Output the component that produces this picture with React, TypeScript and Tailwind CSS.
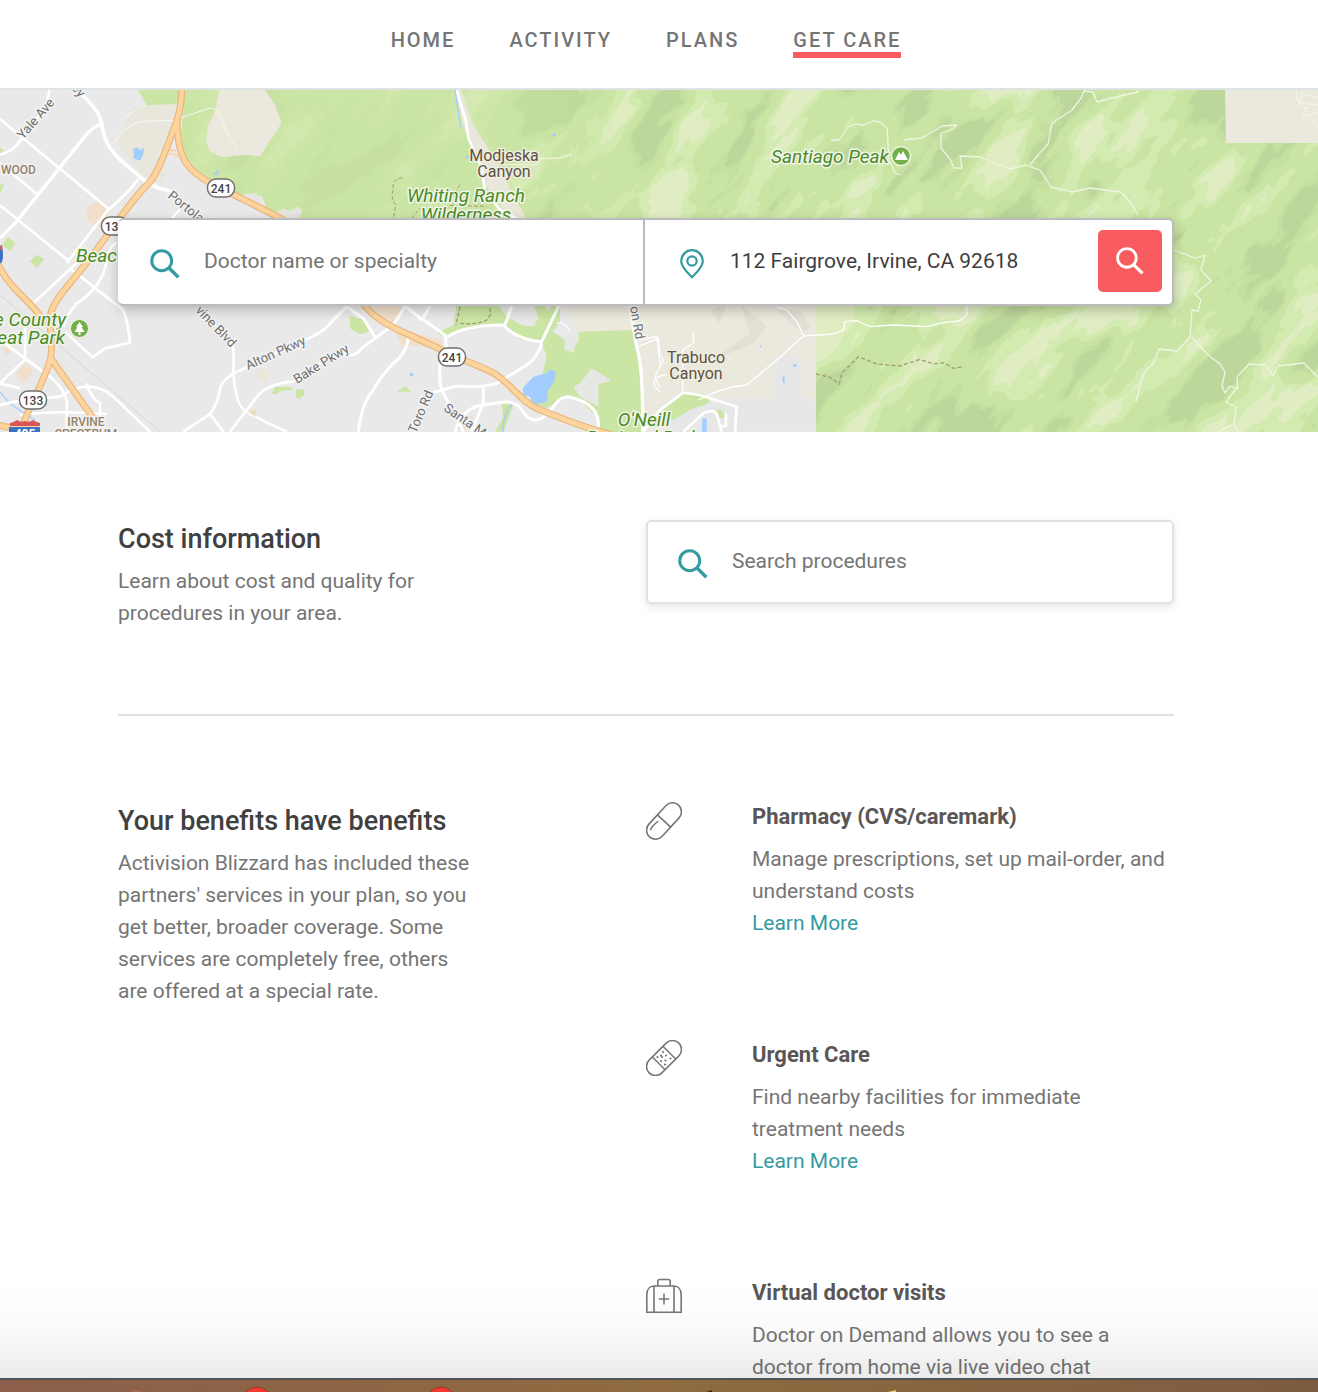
import React from "react";

const FONT = "font-['Roboto','Liberation_Sans',sans-serif]";

function SearchIcon({ className }: { className: string }) {
  return (
    <svg viewBox="0 0 30 30" className={className} fill="none" stroke="currentColor" aria-hidden="true">
      <circle cx="11.7" cy="11.7" r="10" strokeWidth="3" />
      <path d="M18.8 18.8 28.4 28.2" strokeWidth="3.4" />
    </svg>
  );
}

function PinIcon() {
  return (
    <svg viewBox="0 0 24 30" className="mt-1.5 h-[30px] w-6 shrink-0 text-[#349ba1]" fill="none" stroke="currentColor" strokeWidth="2.2" aria-hidden="true">
      <path d="M12 28.2C9 25 1.2 18.500 1.200 12A10.800 10.800 0 0 1 22.800 12C22.800 18.500 15 25 12 28.200Z" />
      <circle cx="12" cy="12" r="4.700" />
    </svg>
  );
}

function PillIcon() {
  return (
    <svg viewBox="0 0 36 38" className="h-[38px] w-9" fill="none" stroke="#767676" strokeWidth="1.6" strokeLinecap="round" aria-hidden="true">
      <g transform="translate(18 19) rotate(-47.500)">
        <rect x="-21.500" y="-9" width="43" height="18" rx="9" />
        <path d="M0-9V9" />
      </g>
      <path d="M4.700 27.500C5.500 24.500 9 22 11.700 19.500" />
    </svg>
  );
}

function BandageIcon() {
  const dots = [
    [17, 12], [15, 15.500], [20, 15.500], [11.500, 17], [16, 17], [24.500, 18.500], [15, 21], [19.500, 20.500], [19, 24.500],
  ];
  return (
    <svg viewBox="0 0 36 36" className="h-9 w-9" fill="none" stroke="#767676" strokeWidth="1.500" aria-hidden="true">
      <g transform="translate(18 18) rotate(-45)">
        <rect x="-21" y="-9" width="42" height="18" rx="9" />
        <path d="M-7.500-9V9M7.500-9V9" />
      </g>
      {dots.map(([x, y]) => (
        <circle key={`${x}-${y}`} cx={x} cy={y} r="1.1" fill="#767676" stroke="none" />
      ))}
    </svg>
  );
}

function BagIcon() {
  return (
    <svg viewBox="0 0 36 36" className="h-9 w-9" fill="none" stroke="#767676" strokeWidth="1.600" aria-hidden="true">
      <path d="M.8 34.200V17C.8 11 4 8 8 8H28C32 8 35.200 11 35.200 17V34.200Z" />
      <path d="M8 8V34M28 8V34M11.800 8V3.500Q11.800 1.500 13.800 1.500H22.200Q24.200 1.500 24.200 3.500V8" />
      <path d="M18 15.500V26.500M12.800 21H23.200" />
    </svg>
  );
}

function Shield({ x, y, label }: { x: number; y: number; label: string }) {
  return (
    <g>
      <rect x={x - 13.500} y={y - 9} width="27" height="18" rx="8.500" fill="#fff" stroke="#6f6f6f" strokeWidth="1.500" />
      <text x={x} y={y + 4.500} textAnchor="middle" fontSize="12" fontWeight="500" fill="#444">
        {label}
      </text>
    </g>
  );
}

const HIGHWAYS = [
  "M182 88C181 108 179 116 173 131C164 155 156 178 146 186C128 204 108 236 84 266C70 284 51 302 50 318C50 335 54 350 49 364C42 386 28 406 20 434",
  "M177 122C178 158 186 170 212 184C232 194 262 208 285 221L362 302C372 316 385 324 405 333L440 349C462 361 488 368 498 376C514 388 522 402 538 409C560 418 585 428 612 435",
  "M-3 262C10 292 34 302 44 322M52 360L96 422M-2 425Q16 430 34 427",
];

function TerrainMap() {
  return (
    <svg
      viewBox="0 90 1318 342"
      preserveAspectRatio="xMidYMid slice"
      className="absolute inset-0 h-full w-full"
      fontFamily="Roboto, 'Liberation Sans', sans-serif"
      role="img"
      aria-label="Map of the area around Irvine"
    >
      <defs>
        <filter id="relief" x="0" y="0" width="100%" height="100%" colorInterpolationFilters="sRGB">
          <feTurbulence type="fractalNoise" baseFrequency="0.009 0.022" numOctaves="4" seed="11" />
          <feColorMatrix values="1 0 0 0 0  1 0 0 0 0  1 0 0 0 0  0 0 0 0 1" />
          <feComponentTransfer>
            <feFuncR type="discrete" tableValues=".745 .745 .745 .745 .745 .745 .745 .775 .796 .796 .796 .831 .831 .88 .88 .88 .88 .88 .88 .88" />
            <feFuncG type="discrete" tableValues=".843 .843 .843 .843 .843 .843 .843 .878 .898 .898 .898 .918 .918 .933 .933 .933 .933 .933 .933 .933" />
            <feFuncB type="discrete" tableValues=".608 .608 .608 .608 .608 .608 .608 .635 .643 .643 .643 .694 .694 .761 .761 .761 .761 .761 .761 .761" />
          </feComponentTransfer>
          <feGaussianBlur stdDeviation="0.6" />
        </filter>
        <clipPath id="hills">
          <path d="M184 88H1320V434H816V306H640L282 219 268 212 262 196 246 194 238 198 212 184 190 165 181 145Z" />
        </clipPath>
        <linearGradient id="flatten" x1="130" x2="820" y1="0" y2="0" gradientUnits="userSpaceOnUse">
          <stop offset="0" stopColor="#cbe5a4" stopOpacity=".75" />
          <stop offset=".45" stopColor="#cbe5a4" stopOpacity=".65" />
          <stop offset=".75" stopColor="#cbe5a4" stopOpacity="0" />
        </linearGradient>
      </defs>

      <rect y="88" width="1318" height="346" fill="#e9e9e9" />

      <g clipPath="url(#hills)">
        <g transform="rotate(-48 659 261)">
          <rect x="-100" y="-500" width="1500" height="1500" filter="url(#relief)" />
        </g>
        <rect x="130" y="88" width="690" height="346" fill="url(#flatten)" />
        <path d="M1225 88H1320V143H1226Z" fill="#ebe8de" />
      </g>
      <path d="M137 88 147 106 176 105 182 88Z" fill="#cbe5a4" />

      {/* sandy ground and small parks, upper left */}
      <g transform="translate(0 88) scale(.33333)">
        <path d="M440 52 400 60 375 105 350 165 400 225 440 275 480 285 500 260 470 200 525 100V48Z" fill="#e9e7dc" />
        <path d="M658 6 645 70 625 110 618 160 630 190 665 208 735 200 780 205 845 105 825 50 795 6Z" fill="#ebe8de" />
        <path d="M730 318 765 316 785 335 780 350ZM830 372 850 362 870 370 895 355 907 370 895 392H840Z" fill="#e7e5e0" />
        <path d="M300 335 265 355 258 380 265 400 298 420 320 385 330 365Z" fill="#f1dfcb" />
        <path d="M400 182 412 178 420 186 432 180 430 198 420 218 402 212Z M640 260 655 243 655 262Z" fill="#a3ccff" />
        <path d="M0 178 12 188 0 198ZM0 290 12 288 0 320ZM25 448 48 465 30 488 5 470ZM90 520 110 500 133 512 110 540Z" fill="#cbe5a4" />
        <g fill="none" stroke="#fff" strokeWidth="8">
          <path d="M240 15C290 60 298 80 306 110C310 150 325 180 360 215L430 275Q460 300 520 312" strokeWidth="11" />
          <path d="M300 110Q270 120 235 170L50 400 0 450" strokeWidth="10" />
          <path d="M0 93 325 362M148 6Q146 30 135 60L60 160Q40 190 0 200M0 352 210 522M0 225 110 318M415 272Q390 310 325 365L200 525M540 365 515 390M350 465Q330 470 318 520" />
          <path d="M345 165Q370 110 430 100L520 97L630 60C680 65 650 110 712 178M375 85 410 67" stroke="#f8f7f2" strokeWidth="3" />
        </g>
        <path d="M495 205Q515 190 535 205M505 187H528" fill="none" stroke="#fbd3a0" strokeWidth="5" />
      </g>

      {/* streets, lower left */}
      <g transform="translate(0 260) scale(.33333)">
        <path d="M75 310 100 330 75 368 45 345ZM5 262H35L20 288Z" fill="#f1dfcb" />
        <path d="M785 325 815 335 800 370 765 345Z" fill="#eae6d8" />
        <path d="M815 400 825 382 875 380V390L840 393 830 403ZM888 388H912V405L898 418 888 412Z" fill="#cbe5a4" />
        <path d="M0 105 480 515" stroke="#cfcfcf" strokeWidth="2" />
        <path d="M0 395C30 440 60 450 105 480" fill="none" stroke="#a3ccff" strokeWidth="4" />
        <g fill="none" stroke="#fff" strokeWidth="8">
          <path d="M0 240 150 350Q210 400 200 450V515M75 195V300Q40 330 0 370L60 385M0 435Q80 415 180 410 270 350 340 410L450 515M60 465Q160 450 320 462M260 370Q270 410 300 430V515M210 25 370 150Q385 190 390 248L315 265 278 292 195 215M320 0Q310 80 230 130 200 165 190 200M100 130 240 0" />
          <path d="M690 235Q705 260 700 330Q705 440 740 455Q800 490 860 515M550 515 630 462Q655 430 660 385 670 350 735 325L880 250Q960 230 995 185M630 462 670 515M690 515 775 405Q810 370 880 365L1000 280" />
        </g>
        <path d="M750 455 765 450V465Z" stroke="#f1dfcb" strokeWidth="8" />
      </g>

      {/* foothill canyon strip */}
      <g transform="translate(330 88) scale(.33333)">
        <path d="M375 6H393L430 110 480 190 540 300 590 395H545L455 280V230L405 130Z" fill="#e9e6dc" />
        <path d="M380 6 408 100 415 150 455 240 465 310 510 365 560 392" fill="none" stroke="#fff" strokeWidth="8" />
        <path d="M375 6 392 118" fill="none" stroke="#a3ccff" strokeWidth="4" />
        <path d="M500 230H615L635 212 690 210 725 198" fill="none" stroke="#eef3dd" strokeWidth="4" />
        <path d="M405 212 412 200 420 208ZM668 136H678V144H668Z" fill="#a3ccff" />
        <path d="M218 270Q185 270 190 305 180 330 197 350L190 392M390 290 370 325M245 392 270 360M360 352 470 355" fill="none" stroke="#a39c74" strokeWidth="3" strokeDasharray="12 6" />
      </g>

      {/* neighbourhoods and park south of the toll road */}
      <g transform="translate(330 260) scale(.33333)">
        <path d="M690 130H1458V515H930Z" fill="#ebe8de" />
        <path d="M380 130H690V185L640 255 670 215 705 240 745 250V215L905 210 925 260 935 340 945 520H815L800 470 740 410 700 410 650 445 615 432 640 330 650 290 635 245 570 240 525 195 470 195 400 205 345 228 320 220 370 195Z" fill="#cbe5a4" />
        <path d="M500 130H610L625 175 610 200 575 195 530 170ZM640 130H670L655 155ZM705 225 745 225 730 278 703 268ZM785 325 845 362 805 372V440L750 410 730 380 750 370Z" fill="#e7e7e5" />
        <path d="M60 168 105 180 118 215 90 222 60 205ZM200 395 225 377 245 395ZM515 430 550 435 520 515H495L520 470Z" fill="#cbe5a4" />
        <path d="M120 130H218L205 175 180 195ZM185 200 335 240V275L290 260 235 255 215 255ZM400 460 430 470 405 510H375Z" fill="#f1dfcb" />
        <path d="M578 385 610 350 650 340 660 328 678 335 672 365 655 390 650 425 608 435 600 410 580 405ZM240 340H250V348H240Z" fill="#a3ccff" />
        <path d="M555 425Q520 450 518 515" fill="none" stroke="#a3ccff" strokeWidth="4" />
        <g fill="none" stroke="#fff" strokeWidth="9">
          <path d="M0 190 50 140 100 175 137 235M40 285Q80 290 95 265L190 195 225 140 345 225 350 265M230 140 275 180M300 140 275 180M0 0M235 235Q230 280 190 310 150 350 130 390 95 430 85 515M345 235Q400 195 520 195 560 240 635 245L690 130M525 195 545 140M635 250Q625 290 590 315L500 370Q450 385 380 378L300 400M330 310Q325 370 340 400 380 470 400 515M460 380V430L425 515M375 515Q400 440 460 435L530 425C590 430 570 480 620 480 670 470 670 410 715 410Q810 430 805 500" />
          <path d="M900 140 920 260Q940 320 938 515" strokeWidth="10" />
        </g>
        <g fill="none" stroke="#fff" strokeWidth="4">
          <path d="M680 190Q700 180 720 215M925 260 985 235 990 285 1000 300 975 350 990 385" />
        </g>
        <path d="M390 140 378 195M390 190Q440 195 470 180 490 160 475 140" fill="none" stroke="#a39c74" strokeWidth="4" strokeDasharray="12 6" />
      </g>

      {/* canyon settlement */}
      <g transform="translate(640 260) scale(.33333)">
        <path d="M260 415H400V290H482V400L528 430V515H60L100 460Z" fill="#e7e7e7" />
        <path d="M70 450 130 400 185 400 210 415 205 430 150 450 100 480ZM220 460 240 447 258 470 240 475Z" fill="#cbe5a4" />
        <path d="M188 475H200V515H185ZM428 348 434 350V372L427 365ZM460 312H470V320H460ZM358 258 365 255 363 265Z" fill="#a3ccff" />
        <path d="M300 130 380 200 340 250 220 300 330 220ZM410 150 480 150 510 200 490 220ZM210 150 260 130 240 190Z" fill="#e2dfd4" />
        <g fill="none" stroke="#fff" strokeWidth="6">
          <path d="M10 515 60 450 130 398 180 405 290 440 285 515M130 515 190 460Q230 440 235 480L245 515M240 498H258V460" strokeWidth="8" />
          <path d="M0 240 50 230 60 310M80 345Q30 350 45 380L60 395M128 395V270L160 250V220M175 420Q250 380 320 375 360 340 400 310L490 228 580 222 610 210 615 185 650 182 690 200 760 195 860 200 910 188 960 182 980 165V140M490 225 470 185 440 150 410 140" strokeWidth="4" />
        </g>
        <path d="M528 342 570 352 598 372 605 340 655 290 710 312 780 318 840 298 880 312 910 308 940 325 970 320" fill="none" stroke="#a39c74" strokeWidth="4" strokeDasharray="12 7" />
      </g>

      {/* ridge trails */}
      <g fill="none" stroke="#f0f5e2" strokeWidth="1.300" strokeLinejoin="round">
        <path d="M831 140H839L848 127 856 124 863 125 873 121 880 122 887 128 888 143 889 160 895 173 901 175" />
        <path d="M904 140 921 138 936 130 942 126 957 125 951 130 941 133 941 148 950 159 954 168H962L960 156 980 157 992 162 1010 169 1025 165 1040 170 1051 187 1072 192 1090 188 1121 192 1130 202 1138 215M1030 165 1038 155 1048 144 1052 123 1072 110 1081 98 1084 91 1093 92 1097 102 1112 98 1138 92V89M1174 250 1195 258 1205 255 1201 270 1211 281 1195 294 1201 300 1198 311 1192 310 1190 337 1177 351 1159 349 1154 362 1143 374 1136 402M1192 337 1207 354 1220 364 1225 372 1222 386 1225 393 1230 386 1238 389 1237 377 1249 364 1266 365 1273 376 1278 366 1304 363 1318 377M1238 386 1226 402 1236 407 1234 424 1218 432M1234 424 1238 433" />
        <path d="M1296 90Q1297 108 1307 108M1302 92 1300 103 1318 105M1304 94 1318 98M1307 108 1302 116 1318 113M1310 117Q1316 126 1320 126" />
      </g>

      {/* freeways */}
      <g fill="none" strokeLinecap="round">
        {HIGHWAYS.map((d) => (
          <path key={`casing-${d}`} d={d} stroke="#e9b77d" strokeWidth="7" />
        ))}
        {HIGHWAYS.map((d) => (
          <path key={d} d={d} stroke="#fdd49d" strokeWidth="4.600" />
        ))}
      </g>

      <Shield x={221} y={188} label="241" />
      <Shield x={115} y={226} label="133" />
      <Shield x={452} y={357} label="241" />
      <Shield x={33} y={400} label="133" />
      <path d="M-2 247 2 245Q4 256 2 262L-2 265Z" fill="#3d73c4" />
      <path d="M-2 247 2 245V250H-2Z" fill="#db5757" />
      <path d="M9 427H40V434H9Z" fill="#3d73c4" />
      <path d="M10 423Q15 422 17 420 21 423 25 421 29 423 33 420 36 422 40 423V426H10Z" fill="#db5757" />
      <text x="25" y="438" textAnchor="middle" fontSize="12" fontWeight="700" fill="#fff">405</text>

      <g paintOrder="stroke" strokeLinejoin="round" strokeWidth="3">
        <g fontSize="13" fill="#6e6e6e" stroke="#f3f3f3">
          <text transform="translate(23 140) rotate(-49)">Yale Ave</text>
          <text transform="translate(71 88) rotate(50)">ey</text>
          <text transform="translate(167 197) rotate(39)">Portola Pkwy</text>
          <text transform="translate(195 311) rotate(46)">vine Blvd</text>
          <text transform="translate(248 370) rotate(-24)">Alton Pkwy</text>
          <text transform="translate(297 384) rotate(-32)">Bake Pkwy</text>
          <text transform="translate(416 434) rotate(-67)">Toro Rd</text>
          <text transform="translate(443 410) rotate(35)">Santa Margarita</text>
          <text transform="translate(630 307) rotate(80)">on Rd</text>
        </g>
        <g fontSize="12" fontWeight="500" fill="#94816a" stroke="#f3f3f3">
          <text x="1" y="174">WOOD</text>
          <text x="86" y="426" textAnchor="middle">IRVINE</text>
          <text x="86" y="438" textAnchor="middle">SPECTRUM</text>
        </g>
        <g fontSize="16" fill="#5f5145" stroke="#eeeedf" textAnchor="middle">
          <text x="504" y="161">Modjeska</text>
          <text x="504" y="177">Canyon</text>
          <text x="696" y="363">Trabuco</text>
          <text x="696" y="379">Canyon</text>
        </g>
        <g fontSize="19" fontStyle="italic" fill="#4a8a28" stroke="#f2f6e8">
          <text x="466" y="202" textAnchor="middle">Whiting Ranch</text>
          <text x="466" y="221" textAnchor="middle">Wilderness</text>
          <text x="771" y="163">Santiago Peak</text>
          <text x="76" y="262">Beacon</text>
          <text x="66" y="326" textAnchor="end">e County</text>
          <text x="65" y="344" textAnchor="end">eat Park</text>
          <text x="644" y="426" textAnchor="middle">O'Neill</text>
          <text x="643" y="444" textAnchor="middle">Regional Park</text>
        </g>
      </g>
      <circle cx="901" cy="156" r="9.500" fill="#74b04a" stroke="#eef5e3" strokeWidth="1.500" />
      <path d="M895 160 899 152 901 155 903 151 908 160Z" fill="#fff" />
      <circle cx="79.500" cy="328.500" r="9" fill="#74b04a" stroke="#eef5e3" />
      <path d="M79.500 322 83 327H81.500L84.500 332H80.500V335H78.500V332H74.500L77.500 327H76Z" fill="#fff" />
    </svg>
  );
}

const NAV = ["Home", "Activity", "Plans", "Get care"];

function Header() {
  return (
    <header className="shrink-0 border-b-2 border-[#dfe3e3] bg-white pr-[26px]">
      <nav className="flex h-[88px] justify-center gap-[54px] pt-7">
        {NAV.map((item) => {
          const active = item === "Get care";
          return (
            <a
              key={item}
              href="#"
              aria-current={active ? "page" : undefined}
              className={
                active
                  ? "h-[30px] border-b-6 border-[#f95c60] text-xl leading-6 font-medium tracking-[2px] text-[#757575] uppercase"
                  : "h-[30px] text-xl leading-6 font-medium tracking-[2px] text-[#757575] uppercase"
              }
            >
              {item}
            </a>
          );
        })}
      </nav>
    </header>
  );
}

function CareSearch() {
  return (
    <section className="relative shrink-0 overflow-hidden pt-32 pr-[26px] pb-[126px]">
      <TerrainMap />
      <form
        className="relative mx-auto grid h-[88px] max-w-[1056px] grid-cols-2 rounded-md border-y-2 border-r-2 border-[#bbbbbd] bg-white shadow-[0_4px_12px_rgba(0,0,0,0.22)]"
        onSubmit={(e) => e.preventDefault()}
      >
        <label className="flex items-center gap-6 border-r-2 border-[#bbbbbd] pb-0.5 pl-8">
          <SearchIcon className="mt-1.5 h-[30px] w-[30px] shrink-0 text-[#349ba1]" />
          <span className="sr-only">Doctor name or specialty</span>
          <input
            type="text"
            placeholder="Doctor name or specialty"
            className="w-full min-w-0 bg-transparent text-[21px] leading-8 text-[#414141] outline-none placeholder:text-[#757575]"
          />
        </label>
        <div className="flex pt-2.5 pr-2.5 pb-3">
          <label className="flex flex-1 items-center gap-[26px] pl-[35px]">
            <PinIcon />
            <span className="sr-only">Location</span>
            <input
              type="text"
              defaultValue="112 Fairgrove, Irvine, CA 92618"
              className="w-full min-w-0 bg-transparent text-[21px] leading-8 text-[#3f3d3d] outline-none"
            />
          </label>
          <button type="submit" aria-label="Search" className="flex w-16 items-center justify-center rounded-[5px] bg-[#f95c60] text-white">
            <SearchIcon className="h-7 w-7" />
          </button>
        </div>
      </form>
    </section>
  );
}

function SectionIntro({ title, children, className }: { title: string; children: React.ReactNode; className: string }) {
  return (
    <div className={className}>
      <h2 className="text-[27px] leading-8 font-medium text-[#414040]">{title}</h2>
      <p className="mt-2.5 text-[21px] leading-8 text-[#757575]">{children}</p>
    </div>
  );
}

const BENEFITS = [
  { title: "Pharmacy (CVS/caremark)", text: ["Manage prescriptions, set up mail-order, and", "understand costs"], link: true, icon: <PillIcon /> },
  { title: "Urgent Care", text: ["Find nearby facilities for immediate", "treatment needs"], link: true, icon: <BandageIcon /> },
  { title: "Virtual doctor visits", text: ["Doctor on Demand allows you to see a", "doctor from home via live video chat"], link: false, icon: <BagIcon /> },
];

export default function App() {
  return (
    <div className={`flex h-screen flex-col overflow-hidden bg-white ${FONT}`}>
      <Header />
      <div className="relative flex min-h-0 flex-1 flex-col overflow-hidden">
        <CareSearch />
        <main className="pr-[26px]">
          <div className="mx-auto max-w-[1056px]">
            <section className="grid grid-cols-2 border-b-2 border-[#dfe1e1] pt-[88px] pb-[85px]">
              <SectionIntro title="Cost information" className="pt-[3px]">
                Learn about cost and quality for
                <br />
                procedures in your area.
              </SectionIntro>
              <label className="flex h-[84px] items-center gap-6 rounded-[5px] border-2 border-[#dfe3e3] pb-0.5 pl-[30px] shadow-[0_3px_9px_rgba(0,0,0,0.1)]">
                <SearchIcon className="mt-1.5 h-[30px] w-[30px] shrink-0 text-[#349ba1]" />
                <span className="sr-only">Search procedures</span>
                <input
                  type="text"
                  placeholder="Search procedures"
                  className="w-full min-w-0 bg-transparent text-[21px] leading-8 text-[#414141] outline-none placeholder:text-[#757575]"
                />
              </label>
            </section>

            <section className="grid grid-cols-2 pt-[85px]">
              <SectionIntro title="Your benefits have benefits" className="pt-1">
                Activision Blizzard has included these
                <br />
                partners' services in your plan, so you
                <br />
                get better, broader coverage. Some
                <br />
                services are completely free, others
                <br />
                are offered at a special rate.
              </SectionIntro>
              <ul className="flex flex-col gap-[100px]">
                {BENEFITS.map((b) => (
                  <li key={b.title} className="flex">
                    <div className="w-[106px] shrink-0 pt-px">{b.icon}</div>
                    <div className="whitespace-nowrap">
                      <h3 className="text-[22px] leading-8 font-bold text-[#5a5656]">{b.title}</h3>
                      <p className="mt-2.5 text-[21px] leading-8 text-[#757575]">
                        {b.text[0]}
                        <br />
                        {b.text[1]}
                      </p>
                      {b.link && (
                        <a href="#" className="block text-[21px] leading-8 text-[#349ba1]">
                          Learn More
                        </a>
                      )}
                    </div>
                  </li>
                ))}
              </ul>
            </section>
          </div>
        </main>
        <div className="pointer-events-none absolute inset-x-0 bottom-0 h-24 bg-linear-to-b from-transparent via-black/2 to-black/8" />
      </div>
      <footer className="h-3.5 shrink-0 overflow-hidden border-t-2 border-[#50555a] bg-linear-to-r from-[#8b5f4b] via-[#8f6b3f] to-[#7d5b40]">
        <svg className="h-3 w-full" viewBox="0 0 1318 12" preserveAspectRatio="xMidYMin slice" aria-hidden="true">
          <g fill="#f4392f" stroke="#8c3a2a" strokeWidth="1">
            <circle cx="257" cy="22" r="15" />
            <circle cx="441" cy="22" r="15" />
          </g>
          <path d="M130 12Q137 10 143 12Z" fill="#b5655a" />
          <path d="M706 12 712 10V12Z" fill="#3a2c1e" />
          <path d="M888 12 896 10V12Z" fill="#e6cd75" />
        </svg>
      </footer>
    </div>
  );
}
